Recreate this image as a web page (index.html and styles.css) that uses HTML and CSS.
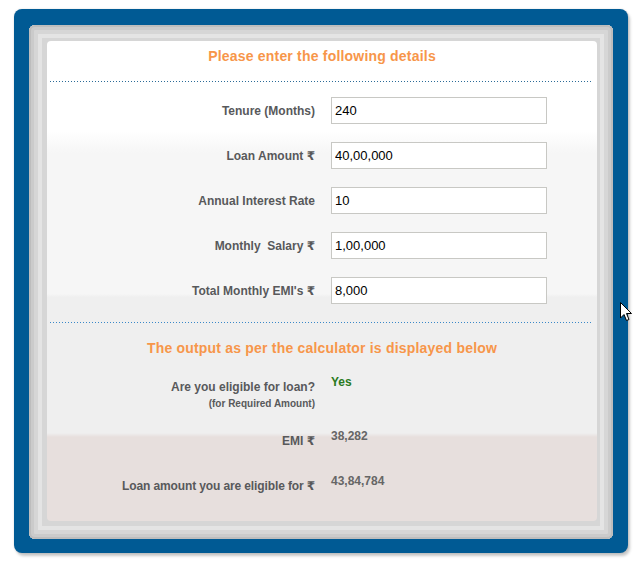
FILE: index.html
```html
<!DOCTYPE html>
<html>
<head>
<meta charset="utf-8">
<link rel="stylesheet" href="styles.css">
</head>
<body>
<div class="outer">
  <div class="frame">
    <div class="panel">
      <h2 class="heading">Please enter the following details</h2>
      <div class="rule rule--dark"></div>
      <div class="form">
        <div class="row"><label class="lbl">Tenure (Months)</label><input class="inp" value="240"></div>
        <div class="row"><label class="lbl">Loan Amount ₹</label><input class="inp" value="40,00,000"></div>
        <div class="row"><label class="lbl">Annual Interest Rate</label><input class="inp" value="10"></div>
        <div class="row"><label class="lbl">Monthly&nbsp; Salary ₹</label><input class="inp" value="1,00,000"></div>
        <div class="row"><label class="lbl">Total Monthly EMI's ₹</label><input class="inp" value="8,000"></div>
      </div>
      <div class="rule rule--light"></div>
      <h2 class="heading heading--out">The output as per the calculator is displayed below</h2>
      <div class="results">
        <div class="res-row res-row--tall">
          <div class="res-lbl">Are you eligible for loan?<span class="sub">(for Required Amount)</span></div>
          <div class="res-val res-val--yes">Yes</div>
        </div>
        <div class="res-row">
          <div class="res-lbl">EMI ₹</div>
          <div class="res-val">38,282</div>
        </div>
        <div class="res-row">
          <div class="res-lbl res-lbl--tight">Loan amount you are eligible for ₹</div>
          <div class="res-val">43,84,784</div>
        </div>
      </div>
    </div>
  </div>
</div>
<svg class="cursor" width="13" height="20" viewBox="0 0 13 20"><path d="M0.5 0.5 L0.5 16 L4 12.5 L6.5 18.5 L9 17.5 L6.5 11.5 L11.5 11.5 Z" fill="#fff" stroke="#000" stroke-width="1"/></svg>
</body>
</html>
```
FILE: styles.css
```css
html, body {
  margin: 0;
  padding: 0;
  background: #fff;
}
body {
  font-family: "Liberation Sans", Arial, "DejaVu Sans", sans-serif;
  position: relative;
  width: 640px;
  height: 564px;
  overflow: hidden;
}
.outer {
  margin: 9px 0 0 14px;
  width: 614px;
  height: 544px;
  box-sizing: border-box;
  padding: 16px 15px 14px 15px;
  background: #005a94;
  border-radius: 8px;
  box-shadow: 2px 3px 3px rgba(0,0,0,0.22), 0 0 2px rgba(0,0,0,0.15);
}
.frame {
  width: 584px;
  height: 514px;
  box-sizing: border-box;
  padding: 16px 16px 18px 18px;
  border-radius: 6px;
  background: #d6d6d6;
  box-shadow: inset 0 0 0 2px #bdbdbd, inset 0 0 0 5px #cbcbcb, inset 0 0 0 9px #d6d6d6, inset 0 0 0 13px #e4e4e4;
}
.panel {
  width: 550px;
  height: 480px;
  box-sizing: border-box;
  padding-top: 7px;
  border-radius: 4px;
  background: linear-gradient(to bottom, #fff 0, #fff 90px, #f6f6f6 112px, #f6f6f6 253px, #efefef 256px, #efefef 392px, #e7dfdd 396px, #e7dfdd 100%);
}
.heading {
  margin: 0;
  font-size: 14px;
  line-height: 16px;
  font-weight: bold;
  letter-spacing: 0.2px;
  color: #f7964a;
  text-align: center;
}
.rule {
  height: 1px;
  margin: 17px 6px 0 3px;
  background-size: 3px 1px;
}
.rule--dark {
  background-image: linear-gradient(to right, #2b6b98 1px, transparent 1px);
}
.rule--light {
  margin-top: 18px;
  background-image: linear-gradient(to right, #3a88c8 1px, transparent 1px);
}
.form {
  display: flex;
  flex-direction: column;
  gap: 18px;
  margin-top: 15px;
}
.row {
  display: grid;
  grid-template-columns: 268px 216px;
  column-gap: 16px;
  align-items: center;
  height: 27px;
}
.lbl {
  text-align: right;
  font-size: 12px;
  font-weight: bold;
  color: #58595b;
}
.inp {
  box-sizing: border-box;
  width: 216px;
  height: 27px;
  margin: 0;
  padding: 0 0 0 3px;
  border: 1px solid #c8c8c4;
  background: #fff;
  font-family: "Liberation Sans", Arial, sans-serif;
  font-size: 13px;
  color: #000;
  outline: none;
}
.heading--out {
  margin-top: 17px;
}
.results {
  margin-top: 19px;
}
.res-row {
  display: grid;
  grid-template-columns: 268px 200px;
  column-gap: 16px;
  align-items: start;
  padding-bottom: 25px;
}
.res-row--tall {
  padding-bottom: 19px;
}
.res-lbl {
  padding-top: 5px;
  text-align: right;
  font-size: 12px;
  line-height: 15px;
  font-weight: bold;
  color: #58595b;
}
.res-lbl--tight {
  letter-spacing: -0.12px;
}
.sub {
  display: block;
  margin-top: 3px;
  font-size: 10px;
  line-height: 12px;
}
.res-val {
  font-size: 12px;
  line-height: 15px;
  font-weight: bold;
  color: #666;
}
.res-val--yes {
  color: #2a7a22;
}
.cursor {
  position: absolute;
  left: 620px;
  top: 302px;
}
```
